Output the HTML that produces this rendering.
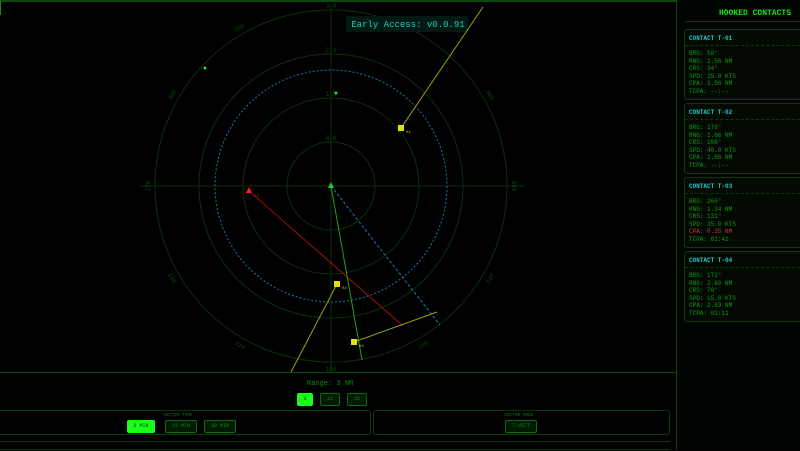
<!DOCTYPE html><html><head><style>
body{margin:0;width:800px;height:450px;background:#000;overflow:hidden;font-family:"Liberation Mono",monospace;position:relative}
.side{position:absolute;left:676px;top:0;width:124px;height:450px;border-left:1px solid #0a4a0a;background:#010501}
.side h1{margin:0;font-size:8px;color:#1de01d;text-align:right;padding:9px 10px 0 0;font-weight:bold;height:12px;border-bottom:1px solid #0a3a0a;margin-left:8px}
.card{position:absolute;left:7px;width:130px;border:1px solid #0a3a0a;border-radius:3px;background:#020a02}
.card .t{color:#1ec8c8;font-size:6px;font-weight:bold;padding:5px 0 3px 4px;border-bottom:1px dashed #0a3a0a}
.card .r{color:#159a15;font-size:6px;padding-left:4px;line-height:7.6px}
.card .first{padding-top:4px}
.bot{position:absolute;left:0;top:372px;width:676px;height:78px;border-top:1px solid #0a4a0a}
.btn{position:absolute;height:11px;border:1px solid #0d6a0d;border-radius:2px;background:#021a02;color:#0d8a0d;font-size:5px;text-align:center;line-height:11px}
.on{background:#1aff1a;color:#064006;border-color:#1aff1a}
.pan{position:absolute;top:410px;height:23px;border:1px solid #0a3a0a;border-radius:3px}
.lbl{position:absolute;font-size:4.5px;color:#0d7a0d}
</style></head><body>
<svg width="676" height="372" style="position:absolute;left:0;top:0">
<line x1="0" y1="1" x2="676" y2="1" stroke="#0a4a0a" stroke-width="2"/>
<line x1="0" y1="1" x2="0" y2="15" stroke="#1a8a1a" stroke-width="2"/>
<g fill="none" stroke="#0a300a" stroke-width="1">
<circle cx="331" cy="186" r="44"/><circle cx="331" cy="186" r="88"/><circle cx="331" cy="186" r="132"/><circle cx="331" cy="186" r="176"/>
<line x1="331" y1="5" x2="331" y2="372"/><line x1="140" y1="186" x2="525" y2="186"/>
</g>
<circle cx="331" cy="186" r="116" fill="none" stroke="#1a7aa0" stroke-width="1" stroke-dasharray="2,2"/>
<g fill="#0a4a0a" font-size="6" font-family="Liberation Mono" text-anchor="middle">
<text x="331" y="140">0.8</text><text x="331" y="96">1.5</text><text x="331" y="52">2.3</text><text x="331" y="8">3.0</text>
<text x="239" y="30" transform="rotate(-30 239 28)">330</text><text x="172" y="97" transform="rotate(-60 172 95)">300</text><text x="148" y="188" transform="rotate(-90 148 186)">270</text><text x="172" y="280" transform="rotate(60 172 278)">240</text><text x="240" y="347" transform="rotate(30 240 345)">210</text><text x="331" y="371">180</text><text x="423" y="347" transform="rotate(-30 423 345)">150</text><text x="490" y="280" transform="rotate(-60 490 278)">120</text><text x="514" y="188" transform="rotate(90 514 186)">090</text><text x="490" y="97" transform="rotate(60 490 95)">060</text><text x="423" y="30" transform="rotate(30 423 28)">030</text>
</g>
<rect x="346" y="16" width="122" height="16" rx="2" fill="#031a14"/>
<text x="408" y="27" fill="#1ec8b8" font-size="9" text-anchor="middle" font-family="Liberation Mono">Early Access: v0.0.91</text>
<line x1="401" y1="128" x2="483" y2="7" stroke="#a0a010"/>
<line x1="249" y1="191" x2="403" y2="326" stroke="#a01010"/>
<line x1="331" y1="186" x2="362" y2="360" stroke="#20a020"/>
<line x1="331" y1="186" x2="440" y2="325" stroke="#1a7aa0" stroke-dasharray="3,2"/>
<line x1="337" y1="284" x2="291" y2="372" stroke="#a0a010"/>
<line x1="354" y1="342" x2="437" y2="312" stroke="#a0a010"/>
<g fill="#e0e010"><rect x="398" y="125" width="6" height="6"/><rect x="334" y="281" width="6" height="6"/><rect x="351" y="339" width="6" height="6"/></g>
<polygon points="249,187 246,193 252,193" fill="#ff2020"/>
<polygon points="331,182 328,188 334,188" fill="#20d020"/>
<circle cx="336" cy="93" r="1.5" fill="#20e020"/><circle cx="205" cy="68" r="1.5" fill="#20e020"/>
<g font-size="4" fill="#c0c010"><text x="406" y="133">01</text><text x="342" y="289">02</text><text x="359" y="347">04</text></g>
<text x="254" y="197" font-size="4" fill="#c01010">03</text>
</svg>
<div class="bot">
<div style="position:absolute;top:7px;width:660px;text-align:center;color:#0d8a0d;font-size:7px">Range: 3 NM</div>
<div class="btn on" style="left:297px;top:20px;width:14px">3</div>
<div class="btn" style="left:320px;top:20px;width:18px">12</div>
<div class="btn" style="left:347px;top:20px;width:18px">36</div>
<div style="position:absolute;left:0;top:68px;width:670px;border-top:1px solid #0a3a0a"></div>
<div style="position:absolute;left:0;top:76px;width:670px;border-top:1px solid #0a3a0a"></div>
</div>
<div class="pan" style="left:-4px;width:373px"><div class="lbl" style="left:166px;top:2px">VECTOR TIME</div>
<div class="btn on" style="left:130px;top:9px;width:26px">6 MIN</div>
<div class="btn" style="left:168px;top:9px;width:30px">15 MIN</div>
<div class="btn" style="left:207px;top:9px;width:30px">30 MIN</div></div>
<div class="pan" style="left:373px;width:295px"><div class="lbl" style="left:130px;top:2px">VECTOR MODE</div>
<div class="btn" style="left:131px;top:9px;width:30px">T-VECT</div></div>
<div class="side"><h1>HOOKED CONTACTS</h1>
<div class="card" style="top:29px;height:69px"><div class="t">CONTACT T-01</div><div class="r first">BRG: 50°</div><div class="r">RNG: 1.56 NM</div><div class="r">CRS: 34°</div><div class="r">SPD: 25.0 KTS</div><div class="r">CPA: 1.56 NM</div><div class="r">TCPA: --:--</div></div>
<div class="card" style="top:103px;height:69px"><div class="t">CONTACT T-02</div><div class="r first">BRG: 176°</div><div class="r">RNG: 1.66 NM</div><div class="r">CRS: 208°</div><div class="r">SPD: 40.0 KTS</div><div class="r">CPA: 1.66 NM</div><div class="r">TCPA: --:--</div></div>
<div class="card" style="top:177px;height:69px"><div class="t">CONTACT T-03</div><div class="r first">BRG: 266°</div><div class="r">RNG: 1.34 NM</div><div class="r">CRS: 131°</div><div class="r">SPD: 35.0 KTS</div><div class="r" style="color:#d03030">CPA: 0.35 NM</div><div class="r">TCPA: 01:41</div></div>
<div class="card" style="top:251px;height:69px"><div class="t">CONTACT T-04</div><div class="r first">BRG: 172°</div><div class="r">RNG: 2.60 NM</div><div class="r">CRS: 70°</div><div class="r">SPD: 15.0 KTS</div><div class="r">CPA: 2.63 NM</div><div class="r">TCPA: 02:11</div></div>
</div>
</body></html>
